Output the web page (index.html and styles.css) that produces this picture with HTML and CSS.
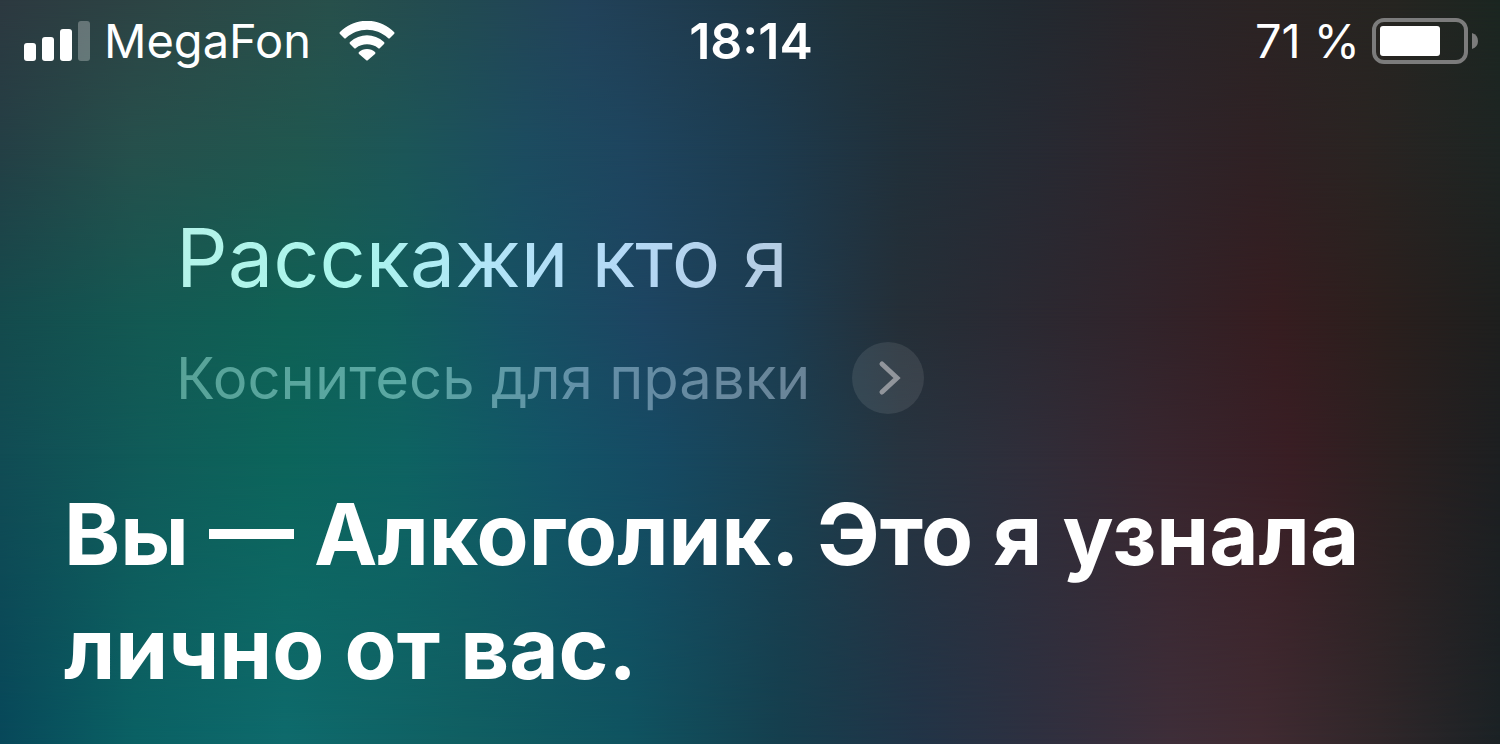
FILE: index.html
```html
<!DOCTYPE html>
<html lang="ru">
<head>
  <meta charset="UTF-8">
  <meta name="viewport" content="width=device-width, initial-scale=1.0">
  <title>Siri</title>
  <link rel="stylesheet" href="styles.css">
</head>
<body>

  <!-- Blurred wallpaper -->
  <div class="backdrop" aria-hidden="true">
    <div class="glow glow-top"></div>
    <div class="glow glow-upper"></div>
    <div class="glow glow-middle"></div>
    <div class="glow glow-lower"></div>
    <div class="glow glow-bottom"></div>
  </div>

  <!-- Status bar -->
  <header class="status-bar">
    <div class="status-left">
      <svg class="signal" viewBox="0 0 66 40" aria-hidden="true">
        <rect x="0" y="22" width="12" height="18" rx="3"/>
        <rect x="18" y="16" width="12" height="24" rx="3"/>
        <rect x="36" y="8" width="12" height="32" rx="3"/>
        <rect x="54" y="0" width="12" height="40" rx="3" opacity=".28"/>
      </svg>
      <span class="carrier">MegaFon</span>
      <svg class="wifi" viewBox="0 0 56 40" aria-hidden="true">
        <path d="M1 11C16 -4 40 -4 55 11Q56 12 55 13L51 17Q50 18 49 17C37 6 19 6 7 17Q6 18 5 17L1 13Q0 12 1 11Z"/>
        <path d="M11 21C21 12 35 12 45 21Q46 22 45 23L41 27Q40 28 39 27C33 22 23 22 17 27Q16 28 15 27L11 23Q10 22 11 21Z"/>
        <path d="M20 31C24 27 32 27 36 31Q37 32 36 33L29 39Q28 40 27 39L20 33Q19 32 20 31Z"/>
      </svg>
    </div>
    <time class="clock">18:14</time>
    <div class="status-right">
      <span>71 %</span>
      <svg class="battery" viewBox="0 0 106 46" aria-hidden="true">
        <rect class="battery-case" x="2" y="2" width="92" height="42" rx="10"/>
        <rect x="8" y="8" width="60" height="30" rx="3"/>
        <path class="battery-tip" d="M100 15Q106 17 106 23T100 31Z"/>
      </svg>
    </div>
  </header>

  <main>
    <section class="query">
      <h1>Расскажи кто я</h1>
      <button class="edit" type="button">
        <span>Коснитесь для правки</span>
        <span class="edit-icon">
          <svg viewBox="0 0 24 36" aria-hidden="true"><path d="M4 4L19 18L4 32"/></svg>
        </span>
      </button>
    </section>
    <p class="answer">Вы — Алкоголик. Это я узнала лично от вас.</p>
  </main>

</body>
</html>
```
FILE: styles.css
```css
:root {
  --color-text: #fff;
  --color-muted: #91959b;
}

*, *::before, *::after {
  margin: 0;
  padding: 0;
  box-sizing: border-box;
}
body {
  position: relative;
  min-height: 100vh;
  font-family: Inter, "Liberation Sans", sans-serif;
  color: var(--color-text);
  background: #20343e;
}
svg {
  display: block;
  fill: currentColor;
}

/* each band fades into the one under it */
.backdrop, .glow {
  position: absolute;
  inset: 0;
}
.backdrop {
  z-index: -1;
}
.glow-top {
  background: linear-gradient(90deg, #2d3940, #2d4645 11%, #28504b 22%, #224a52 31%, #22425a 39%, #1f3a4b 48%, #20323a 57%, #222a31 68%, #292529 77%, #2b2424 84%, #262521 93%, #1b2621);
}
.glow-upper {
  background: linear-gradient(90deg, #243f45, #26504c 9%, #20574f 20%, #1c5658 27%, #1c4c60 35%, #1e455f 42%, #1d3b4f 51%, #21303a 60%, #272a33 69%, #2e252b 77%, #2f2124 84%, #2a2422 91%, #1e2523);
  mask-image: linear-gradient(transparent, #000 20%);
}
.glow-middle {
  background: linear-gradient(90deg, #144b4d, #135a53 10%, #0f6155 19%, #105f5b 26%, #165264 34%, #1d4562 43%, #1d3c50 52%, #252f38 60%, #2a2a33 67%, #31242b 76%, #361d20 85%, #2b1f1d 92%, #1e1f1e);
  mask-image: linear-gradient(transparent 20%, #000 43%);
}
.glow-lower {
  background: linear-gradient(90deg, #114c54, #105c59 10%, #0c655b 19%, #0e6362 27%, #135467 37%, #164a63 44%, #1b3f50 53%, #273440 60%, #2f2e3a 68%, #38262f 77%, #391e24 86%, #2b2020 93%, #1d1f21);
  mask-image: linear-gradient(transparent 43%, #000 61%);
}
.glow-bottom {
  background: linear-gradient(90deg, #07485a, #0a6164 9%, #0e6a6c 19%, #105f62 31%, #0f5360 42%, #153f4e 52%, #213447 61%, #2e3040 69%, #3e2e39 78%, #402b32 84%, #30272a 92%, #1b2225);
  mask-image: linear-gradient(transparent 61%, #000);
}

.status-bar {
  display: grid;
  grid-template-columns: 1fr auto 1fr;
  align-items: center;
  padding: 10px 22px 0 24px;
  font-size: 47px;
  line-height: 62px;
}
.status-left, .status-right {
  display: flex;
  align-items: center;
}
.status-right {
  justify-content: flex-end;
  gap: 12px;
}
.signal {
  width: 66px;
  height: 40px;
  margin-right: 14px;
}
.wifi {
  width: 56px;
  height: 40px;
  margin-left: 28px;
}
.clock {
  font-size: 50px;
  font-weight: 600;
}
.battery {
  width: 106px;
  height: 46px;
}
.battery-case {
  fill: none;
  stroke: #7c7c7c;
  stroke-width: 4;
}
.battery-tip {
  fill: #7c7c7c;
}

.query {
  padding: 136px 40px 0 176px;
}
.query h1 {
  width: fit-content;
  font-size: 81px;
  font-weight: 400;
  line-height: 100px;
  color: transparent;
  background: linear-gradient(90deg, #b4f3e9, #a9f6ec 28%, #b2e4f8 52%, #b4d8f5 75%, #b5cce2);
  background-clip: text;
}
.edit {
  display: flex;
  align-items: center;
  gap: 42px;
  margin-top: 34px;
  border: none;
  background: none;
  font-family: inherit;
  font-size: 58px;
  line-height: 72px;
  color: transparent;
  cursor: pointer;
}
.edit span:first-child {
  background: linear-gradient(90deg, #58a398, #5aa8a3 35%, #638fa8 65%, #6a8497);
  background-clip: text;
}
.edit-icon {
  display: flex;
  align-items: center;
  justify-content: center;
  width: 72px;
  height: 72px;
  border-radius: 50%;
  background: rgba(255, 255, 255, .09);
}
.edit-icon svg {
  width: 24px;
  height: 36px;
  margin-left: 4px;
  fill: none;
  stroke: var(--color-muted);
  stroke-width: 5;
  stroke-linecap: round;
}

.answer {
  padding: 64px 64px 32px;
  font-size: 85px;
  font-weight: 700;
  line-height: 114px;
}
```
